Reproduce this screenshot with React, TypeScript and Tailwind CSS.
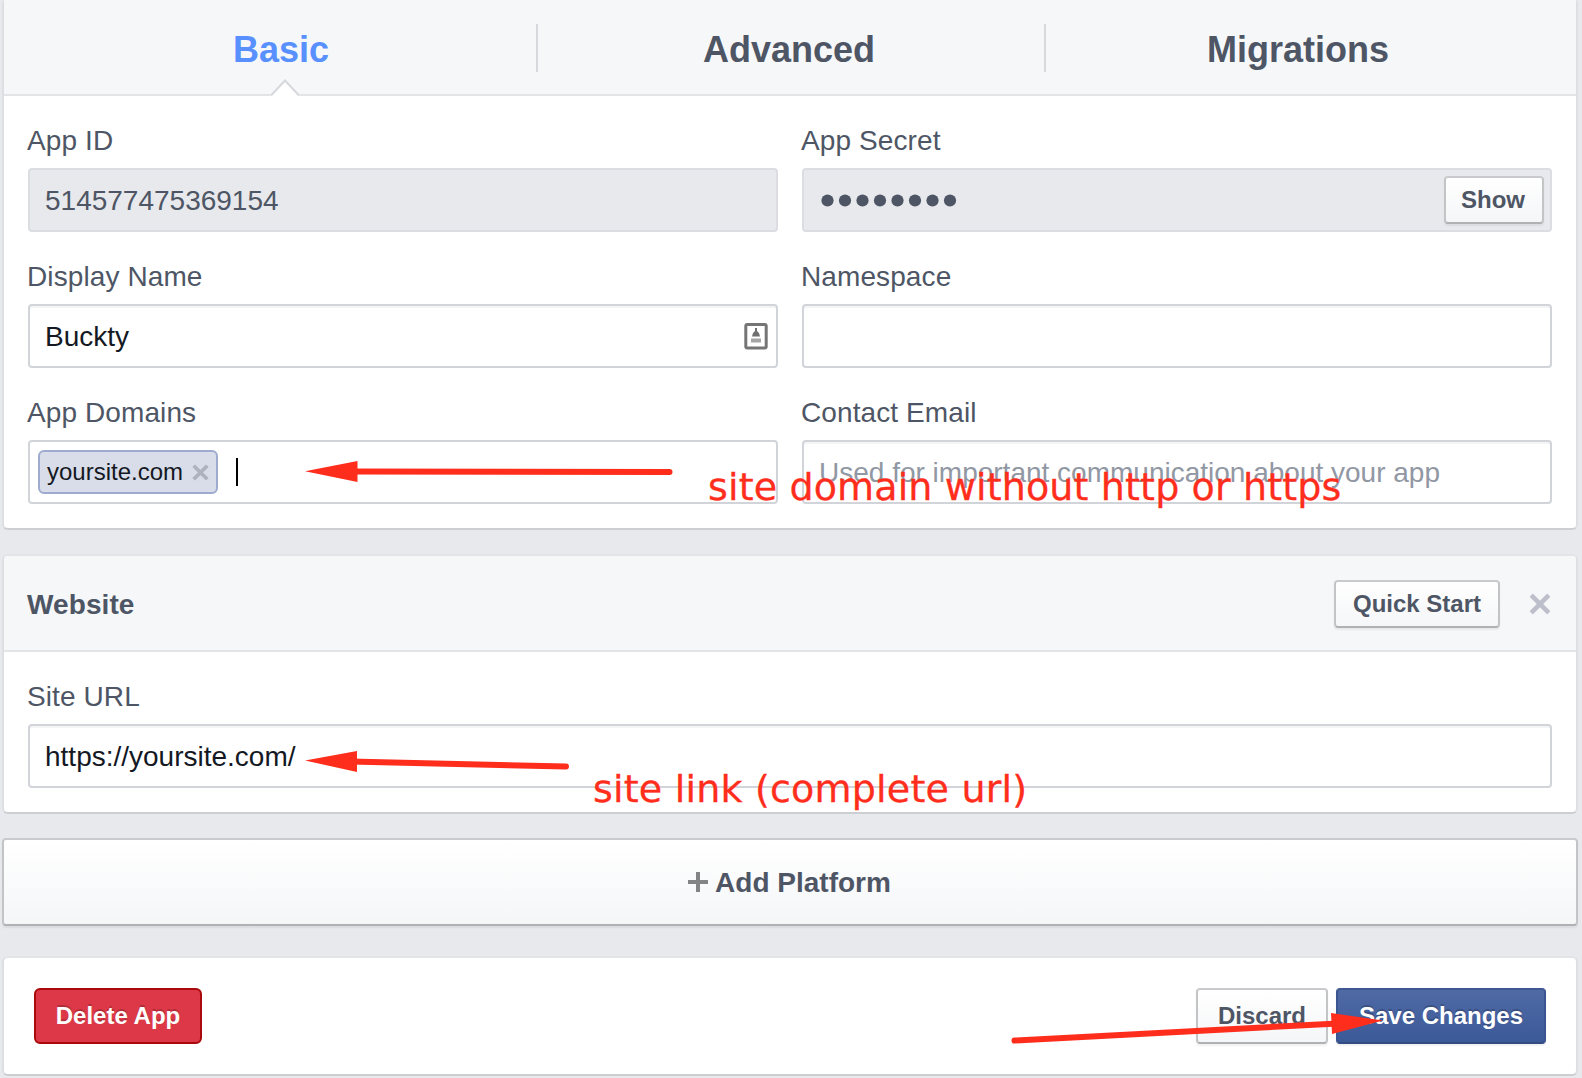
import type { ReactNode } from "react";

const LIGHT_BUTTON =
  "flex items-center justify-center rounded-[4px] border-2 border-t-[#c9cacd] border-x-[#c3c4c6] border-b-[#b0b1b4] bg-linear-to-b from-white to-[#f5f6f8] font-bold text-[#4e5665] shadow-[0_2px_2px_rgba(0,0,0,0.06)]";

function Card({ children, className = "" }: { children: ReactNode; className?: string }) {
  return (
    <section
      className={`rounded-[6px] border-2 border-t-[#e3e4e8] border-x-[#dedfe3] border-b-[#cdced2] bg-white ${className}`}
    >
      {children}
    </section>
  );
}

function Field({
  label,
  children,
  disabled = false,
  flat = false,
}: {
  label: string;
  children?: ReactNode;
  disabled?: boolean;
  flat?: boolean;
}) {
  const look = disabled
    ? "border-[#dcdde3] bg-[#e8e9ed] text-[#4e5665]"
    : flat
      ? "border-[#d1d4d9] bg-white text-[#141823]"
      : "border-[#d1d4d9] bg-white text-[#141823] shadow-[inset_0_2px_0_#f4f4f5]";
  return (
    <div className="flex min-w-0 flex-1 flex-col gap-[11px]">
      <div className="-ml-px h-8 text-[28px] leading-8 tracking-[0.1px] text-[#4e5665]">{label}</div>
      <div className={`flex h-16 items-center rounded-[4px] border-2 text-[28px] leading-8 ${look}`}>{children}</div>
    </div>
  );
}

function Cross({ size, color, width }: { size: number; color: string; width: number }) {
  return (
    <svg width={size} height={size} viewBox="0 0 20 20" className="shrink-0">
      <path d="M2 2 L18 18 M18 2 L2 18" stroke={color} strokeWidth={width} fill="none" />
    </svg>
  );
}

function Tab({ label, active = false }: { label: string; active?: boolean }) {
  return (
    <span
      className={`pt-1 text-[36px] leading-[40px] font-bold ${active ? "text-[#5890ff]" : "text-[#4e5665]"}`}
    >
      {label}
    </span>
  );
}

function Annotations() {
  return (
    <>
      <svg className="pointer-events-none absolute top-0 left-0" width="1582" height="1078" viewBox="0 0 1582 1078">
        <g stroke="#ff2d1c" strokeWidth="6" strokeLinecap="round" fill="none">
          <path d="M350 471.5 L669.5 472" />
          <path d="M350 761.5 L566 766.5" />
          <path d="M1014.5 1040.5 L1338 1023.5" />
        </g>
        <g fill="#ff2d1c">
          <path d="M305 471.3 L357.5 461 V482 Z" />
          <path d="M305 760.5 L357 751 V772 Z" />
          <path d="M1383 1020.5 L1331 1013 L1332 1034 Z" />
        </g>
      </svg>
      <div className="pointer-events-none absolute top-[463px] left-[708px] text-[38px] leading-[48px] tracking-[0.14px] whitespace-nowrap text-[#ff2d1c] [-webkit-text-stroke:0.3px_#ff2d1c] [font-family:'DejaVu_Sans',sans-serif]">
        site domain without http or https
      </div>
      <div className="pointer-events-none absolute top-[765px] left-[593px] text-[38px] leading-[48px] tracking-[0.2px] whitespace-nowrap text-[#ff2d1c] [-webkit-text-stroke:0.3px_#ff2d1c] [font-family:'DejaVu_Sans',sans-serif]">
        site link (complete url)
      </div>
    </>
  );
}

export default function App() {
  return (
    <div className="relative h-[1078px] w-[1582px] overflow-hidden bg-[#e8e9ed] pr-1 pl-0.5 [font-family:'Liberation_Sans',Arial,sans-serif]">
      <Card className="-mt-0.5 h-[532px]">
        <nav className="relative flex h-24 items-center border-b-2 border-[#e3e4e8] bg-[#f6f7f9] pt-0.5">
          <div className="flex h-12 w-[534px] items-center justify-center border-r-2 border-[#d6d8dd] pl-[22px]">
            <Tab label="Basic" active />
          </div>
          <div className="flex h-12 w-[508px] items-center justify-center border-r-2 border-[#d6d8dd] pr-1">
            <Tab label="Advanced" />
          </div>
          <div className="flex h-12 flex-1 items-center justify-center pr-[26px]">
            <Tab label="Migrations" />
          </div>
          <svg className="absolute -bottom-0.5 left-[266px]" width="30" height="17" viewBox="0 0 30 17">
            <path d="M0 17 L15 2 L30 17 Z" fill="#fff" />
            <path d="M1 16.5 L15 1.5 L29 16.5" fill="none" stroke="#d6d8dd" strokeWidth="2" />
          </svg>
        </nav>
        <div className="flex flex-col gap-[29px] px-6 pt-[29px]">
          <div className="flex gap-6">
            <Field label="App ID" disabled>
              <span className="pt-px pl-[15px]">514577475369154</span>
            </Field>
            <Field label="App Secret" disabled>
              <svg className="ml-[17px]" width="140" height="14" viewBox="0 0 140 14" fill="#4e5665">
                {[0, 1, 2, 3, 4, 5, 6, 7].map((i) => (
                  <circle key={i} cx={6.5 + i * 17.5} cy="7.5" r="6.1" />
                ))}
              </svg>
              <button className={`mr-1.5 ml-auto h-12 w-[100px] pr-0.5 text-[24px] ${LIGHT_BUTTON}`}>Show</button>
            </Field>
          </div>
          <div className="flex gap-6">
            <Field label="Display Name">
              <span className="pt-0.5 pl-[15px]">Buckty</span>
              <svg className="mr-2 ml-auto" width="24" height="27" viewBox="0 0 24 27">
                <rect x="1.8" y="1.5" width="20.4" height="23.6" rx="1.5" fill="#fff" stroke="#757575" strokeWidth="3" />
                <path d="M11 5 H13 V8 L15 10 L16 13.5 H8 L9 10 L11 8 Z" fill="#707070" />
                <rect x="7" y="15.5" width="10" height="4" fill="#a5a5a5" />
              </svg>
            </Field>
            <Field label="Namespace" />
          </div>
          <div className="flex gap-6">
            <Field label="App Domains" flat>
              <span className="ml-2 flex h-11 w-[180px] items-center gap-[9px] rounded-[6px] border-2 border-[#9dacce] bg-[#d8dde9] pl-[7px] text-[24px]">
                yoursite.com
                <Cross size={17} color="#adb2be" width={4.4} />
              </span>
              <span className="ml-[18px] h-7 w-0.5 bg-black" />
            </Field>
            <Field label="Contact Email">
              <span className="pt-0.5 pl-[15px] text-[#9197a3]">Used for important communication about your app</span>
            </Field>
          </div>
        </div>
      </Card>

      <Card className="mt-6 h-[260px]">
        <header className="flex h-24 items-center rounded-t-[4px] border-b-2 border-[#e3e4e8] bg-[#f6f7f9] px-6 pt-0.5">
          <h2 className="-ml-px pt-0.5 text-[28px] leading-8 font-bold tracking-[0.1px] text-[#4e5665]">Website</h2>
          <button className={`mr-[29px] ml-auto h-12 w-[166px] text-[24px] ${LIGHT_BUTTON}`}>Quick Start</button>
          <span className="flex w-[23px]">
            <Cross size={22} color="#bdc0ca" width={4.2} />
          </span>
        </header>
        <div className="px-6 pt-[29px]">
          <Field label="Site URL">
            <span className="pt-0.5 pl-[15px]">https://yoursite.com/</span>
          </Field>
        </div>
      </Card>

      <button className={`mt-6 h-[88px] w-full gap-[7px] pr-px text-[28px] ${LIGHT_BUTTON}`}>
        <svg width="20" height="20" viewBox="0 0 20 20" fill="none" stroke="#838486" strokeWidth="4">
          <path d="M10 0 V20 M0 10 H20" />
        </svg>
        <span className="pt-0.5">Add Platform</span>
      </button>

      <Card className="mt-[30px] flex h-[120px] items-center px-[30px]">
        <button className="h-14 w-[168px] rounded-[6px] border-2 border-[#aa0a0c] bg-[#dd3847] text-[24px] font-bold text-white [text-shadow:0_-2px_0_rgba(0,0,0,0.2)]">
          Delete App
        </button>
        <button className={`mr-2 ml-auto h-14 w-[132px] text-[24px] ${LIGHT_BUTTON}`}>Discard</button>
        <button className="h-14 w-[210px] rounded-[4px] border-2 border-t-[#3f5891] border-x-[#3b5590] border-b-[#334c83] bg-linear-to-b from-[#4f6aa5] to-[#3c5998] text-[24px] font-bold text-white shadow-[0_2px_2px_rgba(0,0,0,0.06)] [text-shadow:0_-2px_0_rgba(0,0,0,0.2)]">
          Save Changes
        </button>
      </Card>

      <Annotations />
    </div>
  );
}
